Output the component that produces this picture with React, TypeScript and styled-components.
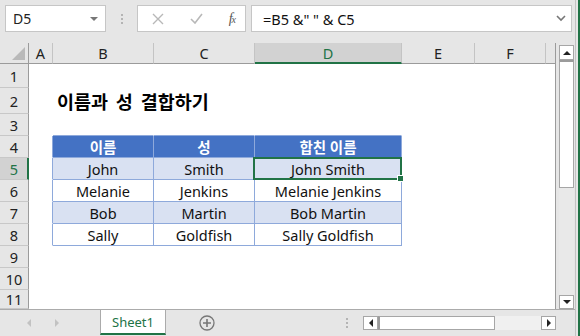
import React from 'react'
import styled, { createGlobalStyle } from 'styled-components'

const GREEN = '#217346'
const TABLE_LINE = '#8ea9db'
const BAND = '#d9e1f2'
const HEAD_FILL = '#4472c4'
const FRAME = '#e6e6e6'

const GlobalStyle = createGlobalStyle`
  html, body { margin: 0; padding: 0; background: ${FRAME}; }
  body { font-family: 'Noto Sans', 'Noto Sans CJK KR', sans-serif; color: #000; }
`

const COLUMNS = [
  { key: 'A', width: 24 },
  { key: 'B', width: 101 },
  { key: 'C', width: 101 },
  { key: 'D', width: 147 },
  { key: 'E', width: 73 },
  { key: 'F', width: 71 },
]

const ROW_HEIGHTS = [24, 26, 22, 22, 22, 22, 22, 22, 22, 22, 19]

const TABLE = [
  ['이름', '성', '합친 이름'],
  ['John', 'Smith', 'John Smith'],
  ['Melanie', 'Jenkins', 'Melanie Jenkins'],
  ['Bob', 'Martin', 'Bob Martin'],
  ['Sally', 'Goldfish', 'Sally Goldfish'],
]

const Window = styled.div`
  width: 580px;
  height: 336px;
  box-sizing: border-box;
  border-right: 2px solid ${GREEN};
  background: ${FRAME};
  overflow: hidden;
`

const Inner = styled.div`
  width: 575px;
  height: 336px;
  border-right: 1px solid #c3c3c3;
  display: flex;
  flex-direction: column;
`

/* formula bar */

const FormulaBar = styled.div`
  height: 43px;
  flex: none;
  box-sizing: border-box;
  padding: 5px 3px 0 5px;
  display: flex;
  align-items: flex-start;
`

const Field = styled.div<{ $w?: number }>`
  height: 27px;
  box-sizing: border-box;
  border: 1px solid #c6c6c6;
  background: #fff;
  display: flex;
  align-items: center;
  position: relative;
  ${p => (p.$w ? `width: ${p.$w}px; flex: none;` : 'flex: 1;')}
`

const NameText = styled.span`
  padding-left: 7px;
  font-size: 14px;
  color: #222;
`

const FormulaText = styled.span`
  padding-left: 11px;
  font-size: 14.5px;
  color: #111;
  white-space: pre;
`

const Grip = styled.div`
  width: 31px;
  flex: none;
  height: 27px;
  display: flex;
  flex-direction: column;
  align-items: center;
  justify-content: center;
  gap: 2px;
  i {
    display: block;
    width: 2px;
    height: 2px;
    background: #b4b4b4;
  }
`

const FnButtons = styled(Field)`
  margin-right: 5px;
  justify-content: space-between;
  padding: 0 10px 0 14px;
`

const FxLabel = styled.span`
  font-family: 'Liberation Serif', serif;
  font-style: italic;
  font-size: 14px;
  color: #555;
  letter-spacing: -1px;
  sub {
    font-size: 10px;
    vertical-align: 0;
  }
`

const EndIcon = styled.span`
  position: absolute;
  right: 5px;
  top: 9px;
  display: flex;
`

/* sheet */

const Workspace = styled.div`
  height: 266px;
  flex: none;
  display: flex;
`

const Sheet = styled.div`
  width: 556px;
  box-sizing: border-box;
  border-right: 1px solid #9b9b9b;
  display: flex;
  flex-direction: column;
  background: #fff;
`

const Line = styled.div<{ $h: number }>`
  display: flex;
  height: ${p => p.$h}px;
  flex: none;
`

const Corner = styled.div`
  width: 29px;
  flex: none;
  box-sizing: border-box;
  border-right: 1px solid #9b9b9b;
  border-bottom: 1px solid #9b9b9b;
  background: ${FRAME};
  display: flex;
  align-items: flex-end;
  justify-content: flex-end;
  padding: 0 3px 3px 0;
`

const ColHead = styled.div<{ $w: number; $active?: boolean }>`
  width: ${p => p.$w}px;
  flex: none;
  box-sizing: border-box;
  border-right: 1px solid #c4c4c4;
  border-bottom: ${p => (p.$active ? `2px solid ${GREEN}` : '1px solid #9b9b9b')};
  background: ${p => (p.$active ? '#d2d2d2' : FRAME)};
  color: ${p => (p.$active ? GREEN : '#222')};
  display: flex;
  align-items: center;
  justify-content: center;
  font-size: 14.5px;
  padding-top: ${p => (p.$active ? 1 : 0)}px;
`

const HeadFiller = styled.div`
  flex: 1;
  box-sizing: border-box;
  border-bottom: 1px solid #9b9b9b;
  background: ${FRAME};
`

const RowHead = styled.div<{ $active?: boolean }>`
  width: 29px;
  flex: none;
  box-sizing: border-box;
  border-right: ${p => (p.$active ? `2px solid ${GREEN}` : '1px solid #9b9b9b')};
  border-bottom: 1px solid #c8c8c8;
  background: ${p => (p.$active ? '#d2d2d2' : FRAME)};
  color: ${p => (p.$active ? GREEN : '#222')};
  display: flex;
  align-items: center;
  justify-content: center;
  font-size: 14.5px;
  padding-left: ${p => (p.$active ? 1 : 0)}px;
`

const Cell = styled.div<{
  $w: number
  $right: string
  $bottom: string
  $fill?: string
  $head?: boolean
  $left?: boolean
}>`
  width: ${p => p.$w}px;
  flex: none;
  box-sizing: border-box;
  border-right: 1px solid ${p => p.$right};
  border-bottom: 1px solid ${p => p.$bottom};
  background: ${p => p.$fill ?? 'transparent'};
  color: ${p => (p.$head ? '#fff' : '#111')};
  font-weight: ${p => (p.$head ? 700 : 400)};
  font-size: 14.5px;
  display: flex;
  align-items: center;
  justify-content: ${p => (p.$left ? 'flex-start' : 'center')};
  white-space: nowrap;
`

const SelectedCell = styled(Cell)`
  position: relative;
`

const Selection = styled.div`
  position: absolute;
  left: -2px;
  top: -1px;
  right: -1px;
  bottom: -1px;
  border: 2px solid ${GREEN};
  pointer-events: none;
  &::after {
    content: '';
    position: absolute;
    right: -4px;
    bottom: -4px;
    width: 5px;
    height: 5px;
    background: ${GREEN};
    border: 1px solid #fff;
  }
`

const Title = styled.span`
  padding-left: 4px;
  font-size: 18.5px;
  font-weight: 700;
  word-spacing: 3px;
  color: #000;
`

const RowFiller = styled.div`
  flex: 1;
`

/* vertical scroll bar */

const VScroll = styled.div`
  flex: 1;
  display: flex;
  flex-direction: column;
  padding: 2px 0 0 3px;
`

const ScrollButton = styled.div<{ $h?: number }>`
  width: 15px;
  height: ${p => p.$h ?? 15}px;
  flex: none;
  box-sizing: border-box;
  border: 1px solid #a6a6a6;
  background: #fff;
  display: flex;
  align-items: center;
  justify-content: center;
`

const VThumb = styled.div`
  width: 15px;
  height: 128px;
  flex: none;
  box-sizing: border-box;
  border: 1px solid #a6a6a6;
  border-top: 2px solid #9b9b9b;
  background: #fff;
`

const VTrack = styled.div`
  flex: 1;
  width: 15px;
  background: #e9e9e9;
`

/* sheet tabs */

const TabBar = styled.div`
  flex: 1;
  box-sizing: border-box;
  border-top: 1px solid #ababab;
  display: flex;
  align-items: flex-start;
`

const NavArrows = styled.div`
  width: 100px;
  flex: none;
  height: 26px;
  display: flex;
  align-items: center;
  padding-left: 27px;
  box-sizing: border-box;
  gap: 24px;
`

const Tab = styled.div`
  width: 66px;
  height: 25px;
  flex: none;
  box-sizing: border-box;
  background: #fff;
  border-left: 1px solid #ababab;
  border-right: 1px solid #ababab;
  border-bottom: 2px solid ${GREEN};
  color: ${GREEN};
  font-size: 13px;
  display: flex;
  align-items: center;
  justify-content: center;
  padding-top: 1px;
`

const AddSheet = styled.div`
  width: 85px;
  flex: none;
  height: 26px;
  display: flex;
  align-items: center;
  padding-left: 33px;
  box-sizing: border-box;
`

const TabGrip = styled(Grip)`
  width: 16px;
  height: 26px;
  margin-left: 88px;
`

const HScroll = styled.div`
  width: 193px;
  flex: none;
  height: 14px;
  margin: 6px 0 0 8px;
  display: flex;
`

const HThumb = styled.div`
  width: 117px;
  height: 14px;
  flex: none;
  box-sizing: border-box;
  border: 1px solid #a6a6a6;
  border-left: 2px solid #9b9b9b;
  background: #fff;
`

const HTrack = styled.div`
  flex: 1;
  background: #f0f0f0;
`

function Tri ({ dir, color = '#222', size = 4 }: { dir: 'up' | 'down' | 'left' | 'right'; color?: string; size?: number }) {
  const s = size
  const points = {
    up: `0,${s} ${s},0 ${2 * s},${s}`,
    down: `0,0 ${2 * s},0 ${s},${s}`,
    left: `${s},0 ${s},${2 * s} 0,${s}`,
    right: `0,0 0,${2 * s} ${s},${s}`,
  }[dir]
  const vertical = dir === 'up' || dir === 'down'
  return (
    <svg width={vertical ? 2 * s : s} height={vertical ? s : 2 * s}>
      <polygon points={points} fill={color} />
    </svg>
  )
}

function Dots () {
  return (
    <>
      <i />
      <i />
      <i />
    </>
  )
}

function lineRight (row: number, col: number) {
  // table spans rows 4-8, columns B-D; column A carries its left edge
  if (row >= 4 && row <= 8 && col >= 0 && col <= 3) return TABLE_LINE
  return 'transparent'
}

function lineBottom (row: number, col: number) {
  if (row >= 3 && row <= 8 && col >= 1 && col <= 3) return TABLE_LINE
  return 'transparent'
}

function SheetRow ({ row, height }: { row: number; height: number }) {
  const data = row >= 4 && row <= 8 ? TABLE[row - 4] : null
  const fill = row === 4 ? HEAD_FILL : row === 5 || row === 7 ? BAND : undefined

  return (
    <Line $h={height}>
      <RowHead $active={row === 5}>{row}</RowHead>
      {COLUMNS.map((c, i) => {
        const inTable = data && i >= 1 && i <= 3
        const props = {
          $w: c.width,
          $right: lineRight(row, i),
          $bottom: lineBottom(row, i),
          $fill: inTable ? fill : undefined,
          $head: row === 4 && !!inTable,
        }
        if (row === 5 && c.key === 'D') {
          return (
            <SelectedCell key={c.key} {...props}>
              {data![2]}
              <Selection />
            </SelectedCell>
          )
        }
        const isTitle = row === 2 && c.key === 'B'
        return (
          <Cell key={c.key} {...props} $left={isTitle}>
            {isTitle && <Title>이름과 성 결합하기</Title>}
            {inTable ? data![i - 1] : null}
          </Cell>
        )
      })}
      <RowFiller />
    </Line>
  )
}

export default function App () {
  return (
    <Window>
      <GlobalStyle />
      <Inner>
        <FormulaBar>
          <Field $w={101}>
            <NameText>D5</NameText>
            <EndIcon style={{ top: 11, right: 7 }}>
              <Tri dir='down' color='#777' size={4} />
            </EndIcon>
          </Field>
          <Grip>
            <Dots />
          </Grip>
          <FnButtons $w={109}>
            <svg width='12' height='12' viewBox='0 0 12 12'>
              <path d='M1 1 L11 11 M11 1 L1 11' stroke='#b8b8b8' strokeWidth='1.4' fill='none' />
            </svg>
            <svg width='13' height='11' viewBox='0 0 13 11'>
              <path d='M1 6 L5 10 L12 1' stroke='#b8b8b8' strokeWidth='1.6' fill='none' />
            </svg>
            <FxLabel>f<sub>x</sub></FxLabel>
          </FnButtons>
          <Field>
            <FormulaText>=B5 &amp;" " &amp; C5</FormulaText>
            <EndIcon>
              <svg width='10' height='7' viewBox='0 0 10 7'>
                <path d='M1 1 L5 5 L9 1' stroke='#777' strokeWidth='1.6' fill='none' />
              </svg>
            </EndIcon>
          </Field>
        </FormulaBar>

        <Workspace>
          <Sheet>
            <Line $h={21}>
              <Corner>
                <svg width='13' height='13'>
                  <polygon points='13,0 13,13 0,13' fill='#b9b9b9' />
                </svg>
              </Corner>
              {COLUMNS.map(c => (
                <ColHead key={c.key} $w={c.width} $active={c.key === 'D'}>
                  {c.key}
                </ColHead>
              ))}
              <HeadFiller />
            </Line>
            {ROW_HEIGHTS.map((h, i) => (
              <SheetRow key={i} row={i + 1} height={h} />
            ))}
          </Sheet>
          <VScroll>
            <ScrollButton>
              <Tri dir='up' size={4} />
            </ScrollButton>
            <VThumb />
            <VTrack />
            <ScrollButton $h={14}>
              <Tri dir='down' size={4} />
            </ScrollButton>
          </VScroll>
        </Workspace>

        <TabBar>
          <NavArrows>
            <Tri dir='left' color='#c2c2c2' size={4} />
            <Tri dir='right' color='#c2c2c2' size={4} />
          </NavArrows>
          <Tab>Sheet1</Tab>
          <AddSheet>
            <svg width='16' height='16' viewBox='0 0 16 16'>
              <circle cx='8' cy='8' r='7' stroke='#777' strokeWidth='1.3' fill='none' />
              <path d='M8 4 V12 M4 8 H12' stroke='#777' strokeWidth='1.6' />
            </svg>
          </AddSheet>
          <TabGrip>
            <Dots />
          </TabGrip>
          <HScroll>
            <ScrollButton $h={14}>
              <Tri dir='left' size={4} />
            </ScrollButton>
            <HThumb />
            <HTrack />
            <ScrollButton $h={14}>
              <Tri dir='right' size={4} />
            </ScrollButton>
          </HScroll>
        </TabBar>
      </Inner>
    </Window>
  )
}
